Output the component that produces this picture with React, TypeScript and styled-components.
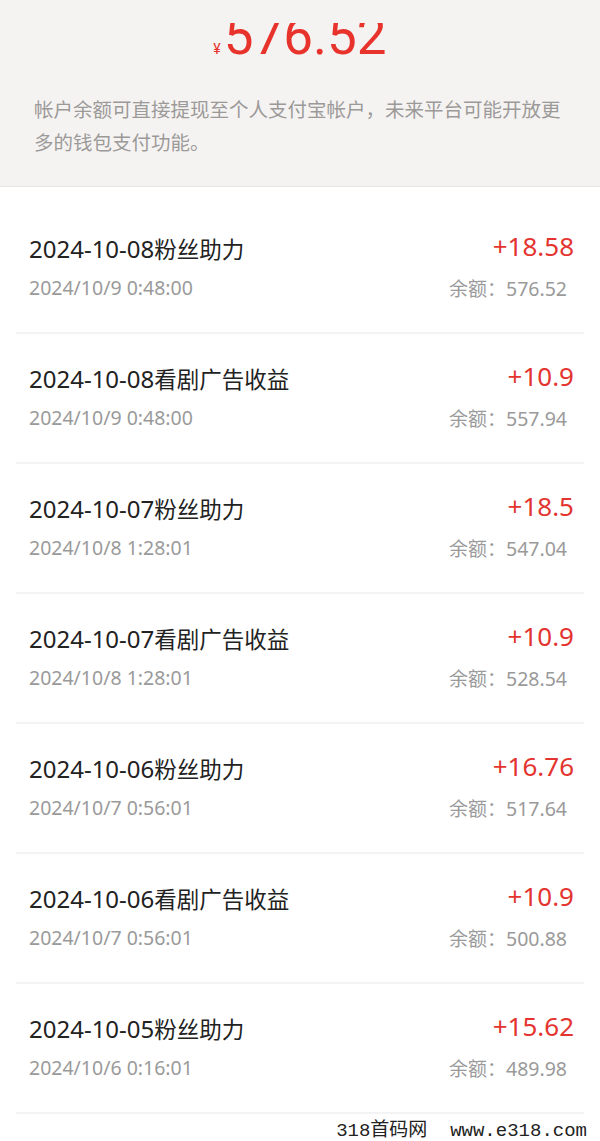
import { createGlobalStyle, styled } from "styled-components";

const GlobalStyle = createGlobalStyle`
  html, body {
    margin: 0;
    padding: 0;
    background: #ffffff;
  }
  body {
    font-family: "Noto Sans", "Noto Sans CJK SC", sans-serif;
  }
`;

const Page = styled.div`
  position: relative;
  width: 600px;
  height: 1141px;
  overflow: hidden;
  background: #ffffff;
`;

const Header = styled.div`
  background: #f5f3f2;
  padding: 23px 0 28px;
  border-bottom: 1px solid #e6e4e3;
`;

const AmountClip = styled.div`
  height: 40px;
  overflow: hidden;
  display: flex;
  justify-content: center;
  align-items: flex-end;
`;

const AmountLine = styled.div`
  display: flex;
  align-items: baseline;
  color: #e8322c;
`;

const Yen = styled.span`
  font-family: "Roboto", sans-serif;
  font-size: 14px;
  margin-right: 3px;
`;

const Balance = styled.span`
  font-family: "Roboto", sans-serif;
  font-size: 53px;
  line-height: 1;
`;

const Desc = styled.p`
  margin: 29px 0 0;
  padding: 0 31px 0 34px;
  font-family: "Noto Sans CJK SC", sans-serif;
  font-size: 19.5px;
  line-height: 33px;
  color: #9c9a99;
`;

const List = styled.div`
  padding-top: 17px;
`;

const Row = styled.div`
  margin: 0 16px;
  padding: 28px 10px 31px 13px;
  border-bottom: 2px solid #f3f3f3;
  display: flex;
  flex-direction: column;
  gap: 11px;
`;

const Line = styled.div<{ $h: number }>`
  height: ${(p) => p.$h}px;
  display: flex;
  justify-content: space-between;
  align-items: center;
`;

const Title = styled.div`
  font-family: "Noto Sans", "Noto Sans CJK SC", sans-serif;
  font-size: 24px;
  line-height: 32px;
  color: #222222;
`;

const Label = styled.span`
  font-family: "Noto Sans CJK SC", sans-serif;
  font-size: 22.5px;
`;

const Plus = styled.div`
  font-family: "Noto Sans", sans-serif;
  font-size: 26px;
  line-height: 32px;
  color: #e3342f;
  margin-bottom: 4px;
`;

const Sub = styled.div<{ $pad?: number }>`
  font-family: "Noto Sans", "Noto Sans CJK SC", sans-serif;
  font-size: 19.5px;
  line-height: 26px;
  color: #9a9a9a;
  padding-right: ${(p) => p.$pad ?? 0}px;
`;

const SubCjk = styled.span`
  font-family: "Noto Sans CJK SC", sans-serif;
  font-size: 19px;
`;

const Watermark = styled.div`
  position: absolute;
  right: 13px;
  bottom: 0;
  font-family: "Liberation Mono", "Noto Sans CJK SC", monospace;
  font-size: 19px;
  line-height: 20px;
  color: #222222;
  white-space: pre;
`;

const records = [
  { day: "2024-10-08", label: "粉丝助力", time: "2024/10/9 0:48:00", amount: "+18.58", left: "576.52" },
  { day: "2024-10-08", label: "看剧广告收益", time: "2024/10/9 0:48:00", amount: "+10.9", left: "557.94" },
  { day: "2024-10-07", label: "粉丝助力", time: "2024/10/8 1:28:01", amount: "+18.5", left: "547.04" },
  { day: "2024-10-07", label: "看剧广告收益", time: "2024/10/8 1:28:01", amount: "+10.9", left: "528.54" },
  { day: "2024-10-06", label: "粉丝助力", time: "2024/10/7 0:56:01", amount: "+16.76", left: "517.64" },
  { day: "2024-10-06", label: "看剧广告收益", time: "2024/10/7 0:56:01", amount: "+10.9", left: "500.88" },
  { day: "2024-10-05", label: "粉丝助力", time: "2024/10/6 0:16:01", amount: "+15.62", left: "489.98" },
];

export default function App() {
  return (
    <Page>
      <GlobalStyle />
      <Header>
        <AmountClip>
          <AmountLine>
            <Yen>¥</Yen>
            <Balance>576.52</Balance>
          </AmountLine>
        </AmountClip>
        <Desc>
          帐户余额可直接提现至个人支付宝帐户，未来平台可能开放更多的钱包支付功能。
        </Desc>
      </Header>
      <List>
        {records.map((r, i) => (
          <Row key={i}>
            <Line $h={32}>
              <Title>
                {r.day}
                <Label>{r.label}</Label>
              </Title>
              <Plus>{r.amount}</Plus>
            </Line>
            <Line $h={26}>
              <Sub>{r.time}</Sub>
              <Sub $pad={7}>
                <SubCjk>余额：</SubCjk>
                {r.left}
              </Sub>
            </Line>
          </Row>
        ))}
      </List>
      <Watermark>{"318首码网  www.e318.com"}</Watermark>
    </Page>
  );
}
